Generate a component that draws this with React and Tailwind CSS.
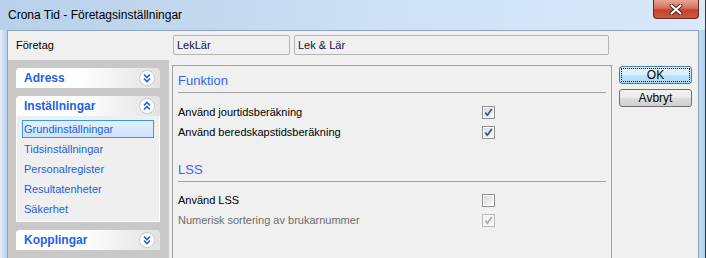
import React from "react";

function Chevrons({ up }) {
  return (
    <svg width="16" height="16" viewBox="0 0 16 16">
      <circle cx="8" cy="8" r="7.5" fill="#ffffff" stroke="#c9c9c9" />
      {up ? (
        <path d="M5 7.5 L8 4.5 L11 7.5 M5 11.5 L8 8.5 L11 11.5" fill="none" stroke="#1d63e0" strokeWidth="1.6" />
      ) : (
        <path d="M5 4.5 L8 7.5 L11 4.5 M5 8.5 L8 11.5 L11 8.5" fill="none" stroke="#1d63e0" strokeWidth="1.6" />
      )}
    </svg>
  );
}

function Header({ title, up }) {
  return (
    <div className="h-[20px] rounded-t-[4px] bg-[linear-gradient(to_right,#ffffff_0%,#ffffff_45%,#e2e2e2_100%)] flex items-center justify-between pl-[8px] pr-[5px]">
      <span className="text-[12px] font-bold text-[#1f5fe6]">{title}</span>
      <Chevrons up={up} />
    </div>
  );
}

function Checkbox({ checked, disabled }) {
  return (
    <span
      className={
        "w-[13px] h-[13px] border p-[1px] flex shrink-0 " +
        (disabled ? "border-[#b9b9b9] bg-[#f7f7f7]" : "border-[#8e8f8f] bg-white")
      }
    >
      <span
        className={
          "flex-1 flex items-center justify-center " +
          (disabled
            ? "bg-[#f4f4f4]"
            : "bg-[linear-gradient(135deg,#d9d9d9,#f8f8f8)]")
        }
      >
        {checked && (
          <svg width="9" height="9" viewBox="0 0 9 9">
            <path
              d="M1.3 4.6 L3.4 7.2 L7.8 1"
              fill="none"
              stroke={disabled ? "#a8a8a8" : "#3a4f8f"}
              strokeWidth="1.7"
            />
          </svg>
        )}
      </span>
    </span>
  );
}

function Row({ label, checked, disabled }) {
  return (
    <div className="h-[20px] flex items-center">
      <span className={"w-[304px] text-[11px] " + (disabled ? "text-[#6d6d6d]" : "text-black")}>{label}</span>
      <Checkbox checked={checked} disabled={disabled} />
    </div>
  );
}

function Btn({ children, focused }) {
  return (
    <div
      className={
        "h-[18px] rounded-[3px] border flex items-center justify-center text-[12px] text-black p-[1px] " +
        (focused
          ? "border-[#3c7fb1] bg-[linear-gradient(to_bottom,#eaf6fd_0%,#d9f0fc_50%,#bee6fd_51%,#a7d9f5_100%)]"
          : "border-[#707070] bg-[linear-gradient(to_bottom,#f2f2f2_0%,#ebebeb_50%,#dddddd_51%,#cfcfcf_100%)]")
      }
    >
      {focused ? (
        <div className="w-full h-full border border-dotted border-black flex items-center justify-center leading-none">
          {children}
        </div>
      ) : (
        <span className="leading-none">{children}</span>
      )}
    </div>
  );
}

export default function App() {
  const items = ["Grundinställningar", "Tidsinställningar", "Personalregister", "Resultatenheter", "Säkerhet"];
  return (
    <div className="w-[706px] h-[258px] overflow-hidden relative bg-[linear-gradient(to_right,#b8d0ea,#cfe2f6_60%,#d9e9f9)] font-['Liberation_Sans',Arial,sans-serif]">
      {/* title bar */}
      <div className="h-[30px] flex items-center pl-[8px] pb-[1px]">
        <span className="text-[12px] text-black">Crona Tid - Företagsinställningar</span>
      </div>
      <div className="absolute top-0 right-[7px] w-[46px] h-[19px] rounded-b-[4px] border border-t-0 border-[#5e2a24] bg-[linear-gradient(to_bottom,#e7a595_0%,#d6705c_45%,#c4422d_55%,#cf5a3f_100%)] flex items-center justify-center">
        <svg width="14" height="11" viewBox="0 0 14 11">
          <path d="M2.5 1.5 L11.5 9.5 M11.5 1.5 L2.5 9.5" stroke="#4a1d17" strokeWidth="4" strokeLinecap="round" />
          <path d="M2.5 1.5 L11.5 9.5 M11.5 1.5 L2.5 9.5" stroke="#ffffff" strokeWidth="2.2" strokeLinecap="round" />
        </svg>
      </div>
      <div className="absolute top-0 right-0 w-[1px] h-full bg-[#3a3a3a]" />

      <div className="flex h-[228px]">
        <div className="w-[7px] bg-[linear-gradient(to_right,#e4eef9,#b7d0ea)]" />
        {/* client */}
        <div className="w-[692px] border-l border-t border-r border-[#8ea4bd] bg-[#f0f0f0] flex flex-col">
          {/* Företag row */}
          <div className="h-[29px] flex items-start shrink-0">
            <div className="w-[165px] pl-[8px] h-[28px] flex items-center text-[11px] text-black">Företag</div>
            <div className="mt-[4px] w-[117px] h-[20px] border border-[#b4b4b4] rounded-[2px] flex items-center pl-[3px] text-[11px] text-[#10103a]">
              LekLär
            </div>
            <div className="mt-[4px] ml-[4px] w-[315px] h-[20px] border border-[#b4b4b4] rounded-[2px] flex items-center pl-[3px] text-[11px] text-[#10103a]">
              Lek &amp; Lär
            </div>
          </div>
          {/* content */}
          <div className="flex flex-1">
            {/* left task pane */}
            <div className="w-[161px] bg-[#c8c8c8] pt-[8px] pl-[8px]">
              <div className="w-[144px]">
                <Header title="Adress" />
                <div className="mt-[8px]">
                  <Header title="Inställningar" up />
                  <div className="border-x border-b border-white bg-[#efefef] pt-[3px] pb-[2px]">
                    {items.map((it, i) => (
                      <div key={it} className="h-[20px] py-[1px] pl-[5px]">
                        <div
                          className={
                            "w-[132px] h-[18px] border pl-[1px] flex items-center text-[11px] text-[#1a5fe0] " +
                            (i === 0 ? "border-[#3d95e6] bg-[linear-gradient(to_bottom,#e2effc,#cfe4fa)]" : "border-transparent")
                          }
                        >
                          {it}
                        </div>
                      </div>
                    ))}
                  </div>
                </div>
                <div className="mt-[8px]">
                  <Header title="Kopplingar" />
                </div>
              </div>
            </div>
            {/* main panel */}
            <div className="ml-[3px] mt-[5px] w-[440px] border border-[#a0a0a0] border-b-0 bg-[#f0f0f0] px-[5px] pt-[4px]">
              <div className="h-[23px] border-b border-[#a0a0a0] text-[13px] leading-[22px] text-[#3a62f0]">Funktion</div>
              <div className="mt-[9px]">
                <Row label="Använd jourtidsberäkning" checked />
                <Row label="Använd beredskapstidsberäkning" checked />
              </div>
              <div className="mt-[17px] h-[23px] border-b border-[#a0a0a0] text-[13px] leading-[22px] text-[#3a62f0]">LSS</div>
              <div className="mt-[8px]">
                <Row label="Använd LSS" />
                <Row label="Numerisk sortering av brukarnummer" checked disabled />
              </div>
            </div>
            {/* buttons */}
            <div className="ml-[7px] mt-[6px] w-[73px] flex flex-col gap-[5px]">
              <Btn focused>OK</Btn>
              <Btn>Avbryt</Btn>
            </div>
          </div>
        </div>
        <div className="flex-1 bg-[linear-gradient(to_right,#c5dcf3,#a9cbee)]" />
      </div>
    </div>
  );
}
